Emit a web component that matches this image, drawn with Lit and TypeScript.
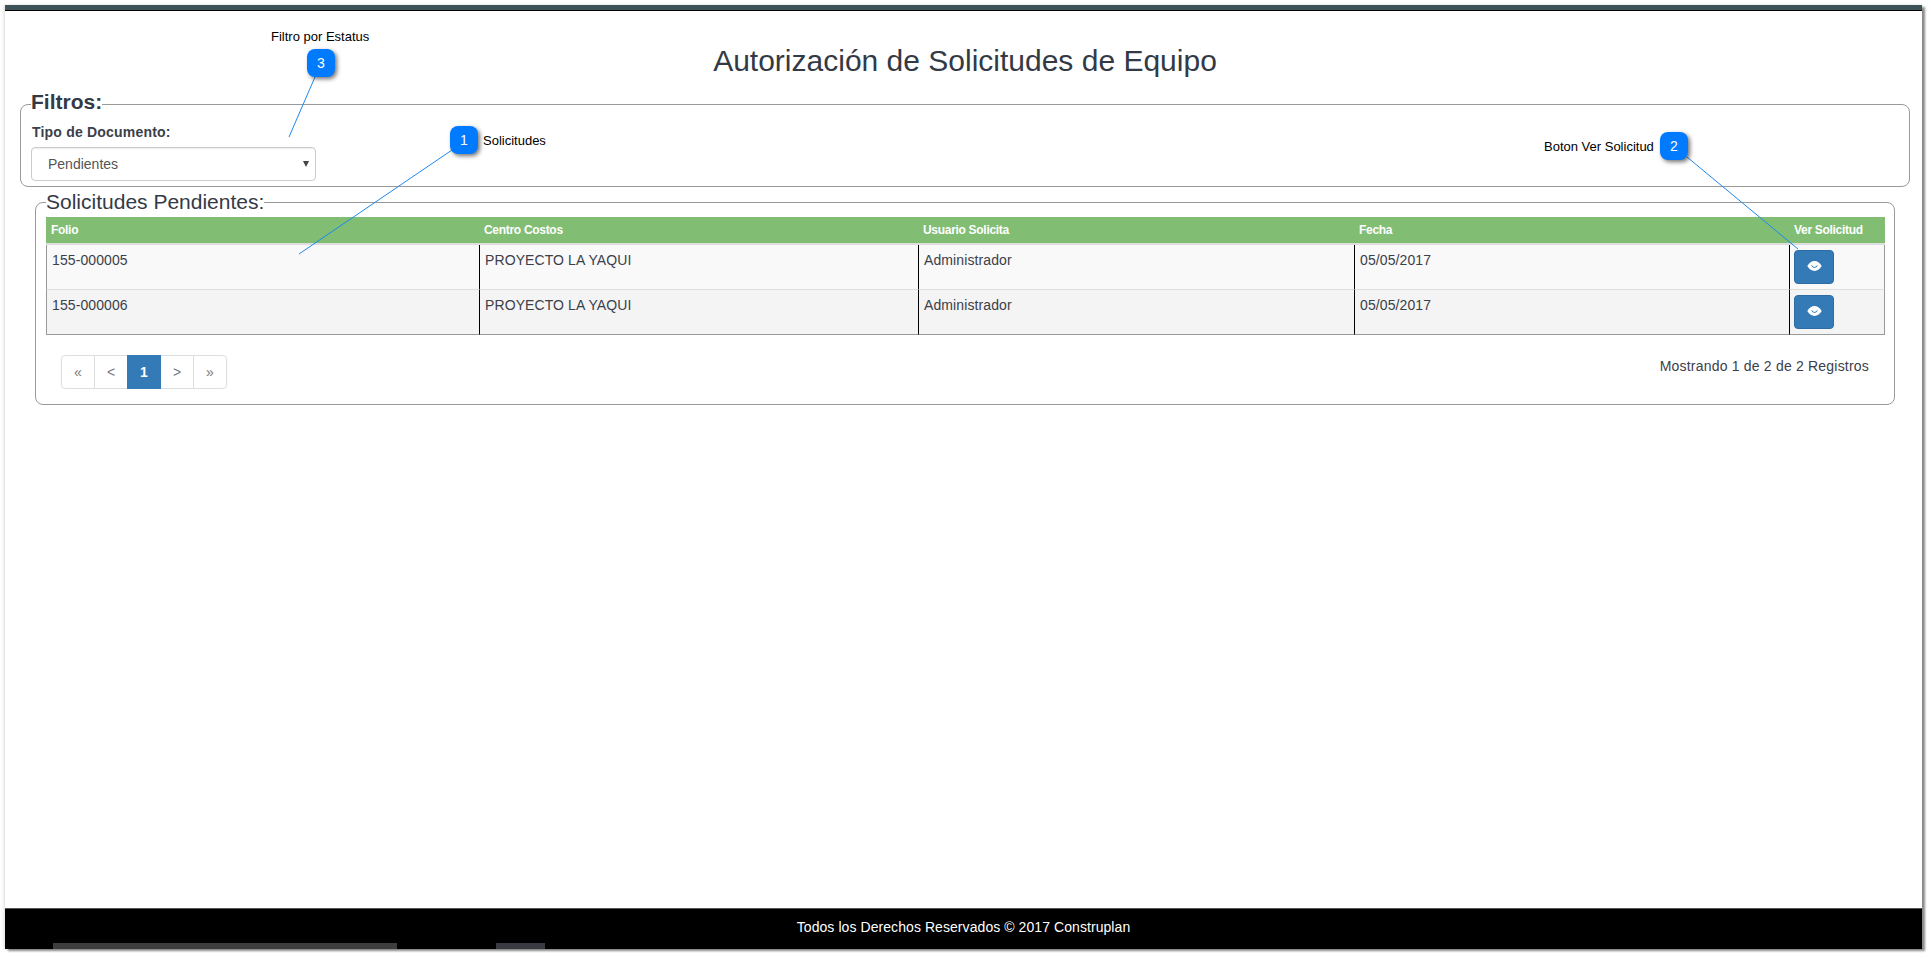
import { LitElement, html, css, svg } from "lit";
import { customElement } from "lit/decorators.js";

const rows = [
  { folio: "155-000005", centro: "PROYECTO LA YAQUI", usuario: "Administrador", fecha: "05/05/2017" },
  { folio: "155-000006", centro: "PROYECTO LA YAQUI", usuario: "Administrador", fecha: "05/05/2017" },
];

const callouts = [
  { n: "3", x: 307, y: 49, w: 28, label: "Filtro por Estatus", lx: 271, ly: 29 },
  { n: "1", x: 450, y: 126, w: 28, label: "Solicitudes", lx: 483, ly: 133 },
  { n: "2", x: 1660, y: 132, w: 28, label: "Boton Ver Solicitud", lx: 1544, ly: 139 },
];

const lines = [
  [315, 77, 289, 137],
  [452, 150, 299, 254],
  [1687, 157, 1798, 249],
];

@customElement("app-root")
export class AppRoot extends LitElement {
  static styles = css`
    :host {
      display: block;
      position: relative;
      height: 958px;
      background: #fff;
      overflow: hidden;
      font-family: "Liberation Sans", Arial, sans-serif;
      font-size: 14px;
      color: #3b404a;
    }
    .frame {
      box-sizing: border-box;
      width: 1917px;
      height: 944px;
      margin: 5px 0 0 5px;
      display: flex;
      flex-direction: column;
      background: #fff;
      box-shadow: 3px 2px 2px rgba(0, 0, 0, 0.45), -1px 0 3px rgba(0, 0, 0, 0.15);
    }
    .topbar {
      height: 5px;
      background: #3d5158;
      border-bottom: 1px solid #000;
      flex: none;
    }
    .main {
      flex: 1;
      display: flex;
      flex-direction: column;
      padding: 0 12px 0 15px;
    }
    h2 {
      margin: 0;
      padding-top: 33px;
      line-height: 33px;
      font-size: 30px;
      font-weight: 400;
      text-align: center;
      color: #333a45;
    }
    fieldset {
      margin: 0;
      min-width: 0;
      border: 1px solid #999;
      border-radius: 8px;
    }
    legend {
      padding: 0;
      line-height: 23px;
      font-size: 21px;
      color: #333a45;
    }
    .filters {
      box-sizing: border-box;
      height: 97px;
      margin-top: 13px;
      padding: 0 10px;
    }
    .filters legend {
      font-weight: 700;
      padding-bottom: 6px;
    }
    label {
      display: block;
      font-weight: 700;
      font-size: 14px;
      line-height: 20px;
      margin: 3px 0 5px 1px;
      letter-spacing: 0.2px;
    }
    .select-wrap {
      position: relative;
      width: 285px;
    }
    .select-wrap::after {
      content: "";
      position: absolute;
      right: 7px;
      top: 14px;
      border-left: 3px solid transparent;
      border-right: 3px solid transparent;
      border-top: 6px solid #444;
    }
    select {
      display: block;
      width: 100%;
      height: 34px;
      padding: 6px 16px;
      appearance: none;
      background: #fff;
      border: 1px solid #ccc;
      border-radius: 4px;
      color: #555;
      font: 14px "Liberation Sans", Arial, sans-serif;
      box-shadow: inset 0 1px 1px rgba(0, 0, 0, 0.075);
    }
    .requests {
      box-sizing: border-box;
      margin: 3px 15px 0 15px;
      padding: 0 10px 15px;
    }
    .requests legend {
      padding-bottom: 2px;
    }
    table {
      width: 1839px;
      table-layout: fixed;
      border-collapse: separate;
      border-spacing: 0;
      margin-top: 2px;
    }
    .c1 { width: 433px; }
    .c2 { width: 439px; }
    .c3 { width: 436px; }
    .c4 { width: 435px; }
    .c5 { width: 96px; }
    th {
      height: 26px;
      box-sizing: border-box;
      padding: 0 5px;
      background: #81bd73;
      color: #fff;
      font-size: 12px;
      line-height: 16px;
      font-weight: 700;
      letter-spacing: -0.3px;
      text-align: left;
      border-bottom: 2px solid #ddd;
    }
    thead tr {
      height: 28px;
    }
    td {
      height: 45px;
      box-sizing: border-box;
      padding: 5px;
      vertical-align: top;
      line-height: 20px;
      letter-spacing: 0.1px;
      background: #f9f9f9;
      border-left: 1px solid #000;
      border-bottom: 1px solid #ddd;
    }
    tbody tr:nth-child(2) td {
      background: #f4f4f4;
      border-bottom-color: #999;
    }
    td:first-child {
      border-left-color: #999;
    }
    td:last-child {
      padding-left: 4px;
      border-right: 1px solid #999;
    }
    .eye-btn {
      display: flex;
      align-items: center;
      justify-content: center;
      width: 40px;
      height: 34px;
      padding: 0 0 2px;
      background: #337ab7;
      border: 1px solid #2e6da4;
      border-radius: 4px;
    }
    .eye-btn svg {
      display: block;
      width: 15px;
      height: 10px;
    }
    .pager-row {
      display: flex;
      align-items: center;
      justify-content: space-between;
      margin-top: 20px;
      padding: 0 15px;
    }
    .pager {
      display: flex;
    }
    .pager span {
      box-sizing: border-box;
      width: 34px;
      height: 34px;
      margin-left: -1px;
      display: flex;
      align-items: center;
      justify-content: center;
      background: #fff;
      border: 1px solid #ddd;
      color: #777;
      font-size: 14px;
    }
    .pager span:first-child {
      margin-left: 0;
      border-radius: 4px 0 0 4px;
    }
    .pager span:last-child {
      border-radius: 0 4px 4px 0;
    }
    .pager span.on {
      background: #337ab7;
      border-color: #337ab7;
      color: #fff;
      font-weight: 700;
      position: relative;
    }
    .count {
      letter-spacing: 0.2px;
      margin-bottom: 12px;
    }
    .footer {
      flex: none;
      height: 41px;
      box-sizing: border-box;
      display: flex;
      flex-direction: column;
      background: #000;
      border-top: 1px solid #555;
      color: #fff;
    }
    .footer-text {
      flex: 1;
      display: flex;
      align-items: center;
      justify-content: center;
      padding-top: 2px;
      font-size: 14px;
      letter-spacing: 0.07px;
    }
    .strips {
      flex: none;
      height: 6px;
      display: flex;
    }
    .strip-a {
      width: 344px;
      margin-left: 48px;
      background: #3d3d3d;
    }
    .strip-b {
      width: 49px;
      margin-left: 99px;
      background: #3a3a42;
    }
    .callouts {
      position: absolute;
      inset: 0;
      pointer-events: none;
    }
    .callouts svg {
      position: absolute;
      inset: 0;
      width: 100%;
      height: 100%;
    }
    .badge {
      position: absolute;
      box-sizing: border-box;
      height: 28px;
      display: flex;
      align-items: center;
      justify-content: center;
      background: #007bff;
      color: #fff;
      border-radius: 8px;
      font-size: 14px;
      box-shadow: 2px 2px 4px rgba(0, 0, 0, 0.55);
    }
    .tag {
      position: absolute;
      color: #000;
      font-size: 13px;
      line-height: 16px;
      white-space: nowrap;
    }
  `;

  private eye() {
    return svg`<svg viewBox="0 0 15 10" aria-hidden="true">
      <path fill="#fff" d="M.3 5C2.4 1.6 4.7.1 7.5.1S12.6 1.6 14.7 5C12.6 8.4 10.3 9.9 7.5 9.9S2.4 8.4 .3 5Z"/>
      <path fill="none" stroke="#337ab7" stroke-width="1" d="M4.7 4.3a2.9 2.9 0 0 0 5.6 0"/>
    </svg>`;
  }

  render() {
    return html`
      <div class="frame">
        <div class="topbar"></div>
        <div class="main">
          <h2>Autorización de Solicitudes de Equipo</h2>
          <fieldset class="filters">
            <legend>Filtros:</legend>
            <label for="tipo">Tipo de Documento:</label>
            <div class="select-wrap">
              <select id="tipo">
                <option>Pendientes</option>
                <option>Autorizadas</option>
                <option>Rechazadas</option>
              </select>
            </div>
          </fieldset>
          <fieldset class="requests">
            <legend>Solicitudes Pendientes:</legend>
            <table>
              <colgroup>
                <col class="c1" /><col class="c2" /><col class="c3" /><col class="c4" /><col class="c5" />
              </colgroup>
              <thead>
                <tr>
                  <th>Folio</th>
                  <th>Centro Costos</th>
                  <th>Usuario Solicita</th>
                  <th>Fecha</th>
                  <th>Ver Solicitud</th>
                </tr>
              </thead>
              <tbody>
                ${rows.map(
                  (r) => html`<tr>
                    <td>${r.folio}</td>
                    <td>${r.centro}</td>
                    <td>${r.usuario}</td>
                    <td>${r.fecha}</td>
                    <td><button class="eye-btn" aria-label="Ver Solicitud">${this.eye()}</button></td>
                  </tr>`
                )}
              </tbody>
            </table>
            <div class="pager-row">
              <div class="pager">
                <span>«</span><span>&lt;</span><span class="on">1</span><span>&gt;</span><span>»</span>
              </div>
              <div class="count">Mostrando 1 de 2 de 2 Registros</div>
            </div>
          </fieldset>
        </div>
        <div class="footer">
          <div class="footer-text">Todos los Derechos Reservados © 2017 Construplan</div>
          <div class="strips"><div class="strip-a"></div><div class="strip-b"></div></div>
        </div>
      </div>
      <div class="callouts">
        <svg viewBox="0 0 1931 958">
          ${lines.map(
            ([x1, y1, x2, y2]) => svg`<line x1=${x1} y1=${y1} x2=${x2} y2=${y2} stroke="#1e88f0" stroke-width="1"/>`
          )}
        </svg>
        ${callouts.map(
          (c) => html`
            <div class="badge" style="left:${c.x}px;top:${c.y}px;width:${c.w}px">${c.n}</div>
            <div class="tag" style="left:${c.lx}px;top:${c.ly}px">${c.label}</div>
          `
        )}
      </div>
    `;
  }
}
